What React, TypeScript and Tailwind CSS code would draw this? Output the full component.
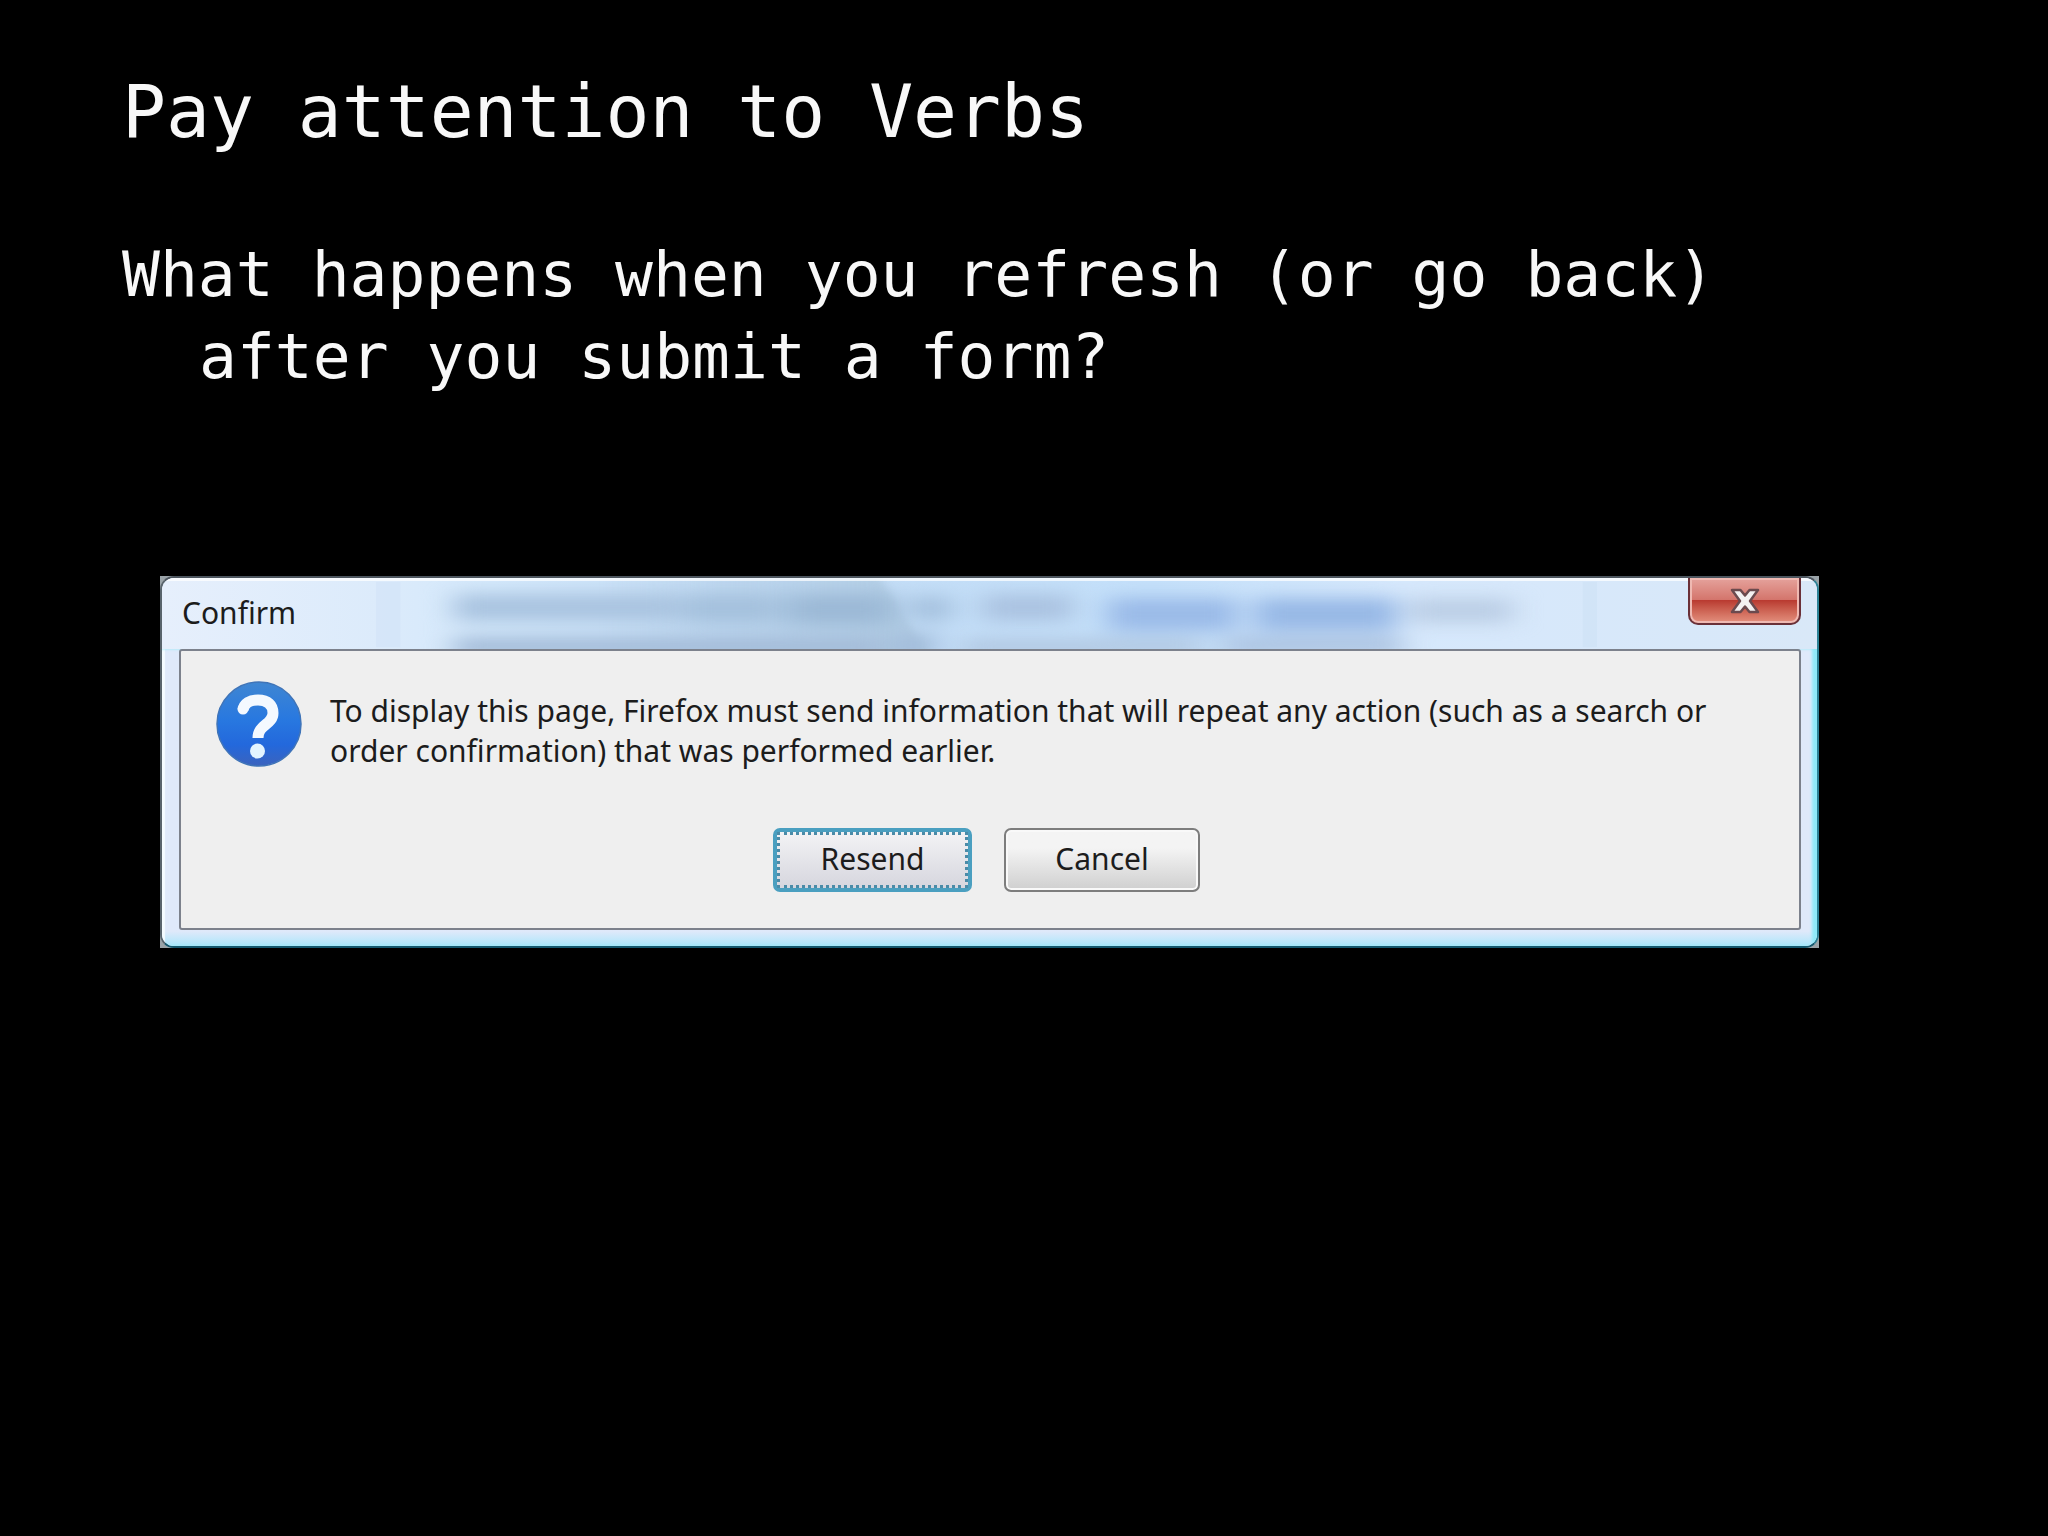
function TitleBackdrop() {
  return (
    <svg
      className="absolute inset-0 h-full w-full"
      viewBox="0 0 1654 72"
      preserveAspectRatio="none"
      aria-hidden="true"
    >
      <defs>
        <filter
          id="soft"
          x="-5%"
          y="-40%"
          width="110%"
          height="180%"
          colorInterpolationFilters="sRGB"
        >
          <feGaussianBlur stdDeviation="14 8" />
        </filter>
        <filter
          id="edge"
          x="-5%"
          y="-40%"
          width="110%"
          height="180%"
          colorInterpolationFilters="sRGB"
        >
          <feGaussianBlur stdDeviation="4" />
        </filter>
        <linearGradient id="glass" x1="0" x2="1" y1="0" y2="0">
          <stop offset="0" stopColor="#e6effc" />
          <stop offset="0.13" stopColor="#dcebfb" />
          <stop offset="0.2" stopColor="#d3e8fb" />
          <stop offset="0.35" stopColor="#c3dcf5" />
          <stop offset="0.6" stopColor="#c4e0fa" />
          <stop offset="0.75" stopColor="#d6e8fc" />
          <stop offset="1" stopColor="#d9e8f8" />
        </linearGradient>
        <linearGradient id="beam" x1="0" x2="1" y1="0" y2="0">
          <stop offset="0" stopColor="#b4cfe8" stopOpacity="0" />
          <stop offset="1" stopColor="#b0cbe2" />
        </linearGradient>
      </defs>
      <rect width="1654" height="72" fill="url(#glass)" />
      <rect x="214" y="4" width="24" height="66" fill="#cfe1f7" opacity="0.5" />
      <rect x="1420" y="4" width="14" height="66" fill="#cbdff4" opacity="0.5" />
      <path d="M440 -6H714L768 80H440Z" fill="url(#beam)" filter="url(#edge)" />
      <g filter="url(#soft)">
        <rect x="292" y="16" width="225" height="28" fill="#aac4e0" />
        <rect x="520" y="16" width="100" height="30" fill="#a5c1dd" />
        <rect x="626" y="16" width="105" height="32" fill="#9cb9d6" />
        <rect x="746" y="18" width="44" height="26" fill="#a6c2df" />
        <rect x="820" y="16" width="90" height="28" fill="#abc3e1" />
        <rect x="945" y="20" width="130" height="34" fill="#9bbbe8" />
        <rect x="1092" y="20" width="142" height="34" fill="#98b9e6" />
        <rect x="1246" y="20" width="104" height="26" fill="#bccfe6" />
        <rect x="292" y="60" width="430" height="20" fill="#a3bbd8" />
        <rect x="730" y="56" width="44" height="24" fill="#a3bddb" />
        <rect x="800" y="62" width="240" height="16" fill="#b0c6e0" />
        <rect x="1060" y="60" width="180" height="18" fill="#aac2e0" />
      </g>
      <rect width="1654" height="3" fill="#ffffff" opacity="0.75" />
    </svg>
  );
}

function QuestionIcon() {
  return (
    <svg className="mt-[2px] h-[86px] w-[86px] shrink-0" viewBox="0 0 86 86" aria-hidden="true">
      <defs>
        <linearGradient id="ball" x1="0" x2="0" y1="0" y2="1">
          <stop offset="0" stopColor="#3f86d2" />
          <stop offset="0.45" stopColor="#2878e0" />
          <stop offset="0.75" stopColor="#2368dc" />
          <stop offset="1" stopColor="#3b63bd" />
        </linearGradient>
      </defs>
      <circle cx="43" cy="43" r="42" fill="url(#ball)" stroke="#3f74b8" strokeWidth="1.5" />
      <path
        d="M27 29C28 22 34 19 42 19C52 19 57 24 57 32C57 44 42 43 42 57"
        fill="none"
        stroke="#f4f9ff"
        strokeWidth="11"
      />
      <circle cx="27" cy="28" r="5.5" fill="#f4f9ff" />
      <circle cx="41.5" cy="70" r="7.5" fill="#e3f4ff" />
    </svg>
  );
}

function CloseIcon() {
  return (
    <svg className="h-[28px] w-[30px]" viewBox="0 0 30 28" aria-hidden="true">
      <path
        d="M2 3H10.5L15 8.5L19.5 3H28L20 14L28 25H19.5L15 19.5L10.5 25H2L10 14Z"
        fill="#f3f1f1"
        stroke="#6b4a4e"
        strokeWidth="2.5"
        strokeLinejoin="round"
      />
    </svg>
  );
}

export default function App() {
  return (
    <main className="min-h-screen bg-black px-[122px] pt-[68px] pb-16 text-[#f8f8f8]">
      <h1 className="font-['DejaVu_Sans_Mono',monospace] text-[73px] leading-[88px]">
        Pay attention to Verbs
      </h1>
      <p className="mt-[78px] pl-[77px] -indent-[77px] font-['DejaVu_Sans_Mono',monospace] text-[63px] leading-[82px]">
        What happens when you refresh (or go back)
        <br />
        after you submit a form?
      </p>

      <div className="mt-[178px] mr-[107px] ml-[38px] bg-[#9aa3a8]">
        <section
          role="dialog"
          aria-labelledby="dialog-title"
          aria-describedby="dialog-text"
          className="overflow-hidden rounded-[14px] border-2 border-t-[#4c555e] border-r-[#2c8296] border-b-[#14586e] border-l-[#59646c] bg-[#dde8f8] font-['Noto_Sans',sans-serif] text-[#1c1c1c]"
        >
          <header className="relative flex h-[71px] items-start justify-between pr-[16px] pl-[20px]">
            <TitleBackdrop />
            <h2 id="dialog-title" className="relative pt-[15px] text-[30px] leading-[40px]">
              Confirm
            </h2>
            <button
              type="button"
              aria-label="Close"
              className="relative flex h-[47px] w-[113px] items-center justify-center rounded-b-[10px] border-2 border-t-0 border-[#6a3038] bg-linear-to-b from-[#e5a39d] from-0% via-[#d3736a] via-50% to-[#e08a7c] to-100% shadow-[inset_0_0_0_2px_#efb9b2]"
            >
              <span className="absolute inset-x-[2px] top-[22px] bottom-[2px] rounded-b-[8px] bg-linear-to-b from-[#b8382f] to-[#e08a78]" />
              <span className="relative">
                <CloseIcon />
              </span>
            </button>
          </header>

          <div className="bg-linear-to-b from-[#dfe9fa] from-95% to-[#a9e6fb] pr-[16px] pb-[16px] pl-[17px] shadow-[inset_-5px_0_3px_#8fe9f8,inset_3px_0_1px_#f4fbff]">
            <div className="rounded-[3px] border-2 border-[#7c818c] bg-[#efefef] pt-[28px] pr-[70px] pb-[36px] pl-[35px]">
              <div className="flex items-start gap-[28px]">
                <QuestionIcon />
                <p id="dialog-text" className="pt-[12px] text-[30px] leading-[40px]">
                  To display this page, Firefox must send information that will repeat any action
                  (such as a search or order confirmation) that was performed earlier.
                </p>
              </div>
              <div className="mt-[57px] flex justify-center gap-8 pl-[28px] text-[30px] leading-[40px]">
                <button
                  type="button"
                  className="h-[64px] w-[199px] rounded-[7px] border-4 border-[#4a9fc0] bg-linear-to-b from-[#f3f3f5] to-[#d6d6de]"
                >
                  <span className="flex h-full items-center justify-center border-3 border-dotted border-[#4a8ba8] pb-[2px]">
                    Resend
                  </span>
                </button>
                <button
                  type="button"
                  className="h-[64px] w-[196px] rounded-[7px] border-2 border-[#7d7d7d] bg-linear-to-b from-[#f4f4f4] from-30% to-[#cfcfcf] pb-[2px] shadow-[inset_0_0_0_2px_#f9f9f9]"
                >
                  Cancel
                </button>
              </div>
            </div>
          </div>
        </section>
      </div>
    </main>
  );
}
